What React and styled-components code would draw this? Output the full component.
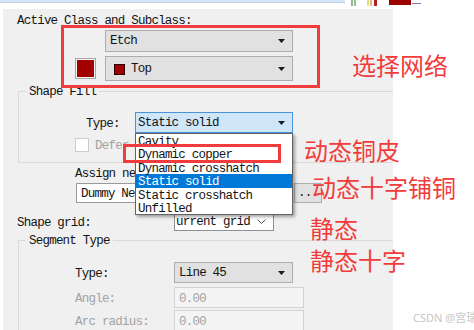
import React from "react";
import styled, { createGlobalStyle } from "styled-components";

const Global = createGlobalStyle`
  html, body { margin: 0; padding: 0; background: #fff; }
  body { font-family: "Liberation Mono", "DejaVu Sans Mono", monospace; }
  * { box-sizing: border-box; }
`;

const Page = styled.div`
  position: relative;
  width: 474px;
  height: 330px;
  overflow: hidden;
  background: #fff;
`;

const TopStrip = styled.div`
  display: flex;
  align-items: flex-start;
  height: 9px;
`;

const TitleBar = styled.div`
  width: 345px;
  height: 3px;
  background: #d3e6f6;
  border-bottom: 1px solid #bcd0e2;
`;

const Bit = styled.div`
  width: ${(p) => p.$w}px;
  height: ${(p) => p.$h}px;
  margin-left: ${(p) => p.$ml || 0}px;
  margin-top: ${(p) => p.$mt || 0}px;
  background: ${(p) => p.$c};
`;

const Panel = styled.div`
  margin-left: 3px;
  width: 390px;
  height: 321px;
  background: #f0f0f0;
  overflow: hidden;
  display: flex;
  flex-direction: column;
  align-items: flex-start;
  padding-top: 4px;
  font-size: 12.5px;
  letter-spacing: -0.78px;
  line-height: 14px;
  color: #141414;
`;

const Label = styled.div`
  margin-left: ${(p) => p.$ml || 0}px;
  margin-top: ${(p) => p.$mt || 0}px;
  width: ${(p) => (p.$w ? `${p.$w}px` : "auto")};
  height: 14px;
  line-height: 16px;
  flex: none;
  white-space: nowrap;
  color: ${(p) => (p.$muted ? "#a3a3a3" : "#141414")};
`;

const ClassGrid = styled.div`
  display: grid;
  grid-template-columns: 21px 188px;
  grid-template-rows: 22px 25px;
  column-gap: 9px;
  row-gap: 4px;
  align-items: center;
  margin-left: 72px;
  margin-top: 3px;
`;

const Swatch = styled.div`
  grid-column: 1;
  grid-row: 2;
  width: 21px;
  height: 21px;
  border: 1px solid #a5a5a5;
  padding: 1px;
  background: #f6f6f6;
  &::after {
    content: "";
    display: block;
    width: 100%;
    height: 100%;
    background: #a30000;
  }
`;

const comboSkins = {
  gray: { bg: "#e1e1e1", bd: "#adadad" },
  focus: { bg: "#cfe5f8", bd: "#4a92dc" },
  white: { bg: "#ffffff", bd: "#8f8f8f" },
  disabled: { bg: "#f4f4f4", bd: "#d2d2d2" },
};

const Combo = styled.div`
  position: relative;
  grid-column: ${(p) => p.$col || "auto"};
  display: flex;
  align-items: center;
  justify-content: space-between;
  flex: none;
  width: ${(p) => p.$w}px;
  height: ${(p) => p.$h || 21}px;
  padding-left: ${(p) => p.$pl ?? 4}px;
  padding-right: 7px;
  background: ${(p) => comboSkins[p.$skin || "gray"].bg};
  border: 1px solid ${(p) => comboSkins[p.$skin || "gray"].bd};
  color: #141414;
  white-space: nowrap;
`;

const ComboText = styled.span`
  display: flex;
  align-items: center;
  gap: 6px;
  height: 14px;
  line-height: 16px;
  overflow: visible;
`;

const LayerIcon = styled.span`
  display: inline-block;
  width: 11px;
  height: 11px;
  margin-top: 2px;
  border: 1px solid #2a0000;
  background: #a30000;
`;

const Row = styled.div`
  display: flex;
  align-items: center;
  margin-left: ${(p) => p.$ml || 0}px;
  margin-top: ${(p) => p.$mt || 0}px;
  gap: ${(p) => p.$gap || 0}px;
`;

const Group = styled.fieldset`
  margin: ${(p) => p.$mt || 0}px 0 0 15px;
  padding: 0 0 ${(p) => p.$pb || 0}px 0;
  width: 400px;
  min-width: 0;
  border: 1px solid #dadada;
  display: flex;
  flex-direction: column;
  align-items: flex-start;
  flex: none;
`;

const Legend = styled.legend`
  margin-left: 7px;
  padding: 0 3px;
  height: 14px;
  line-height: 16px;
  color: #141414;
`;

const Check = styled.span`
  width: 14px;
  height: 14px;
  background: #fff;
  border: 1px solid #cccccc;
  flex: none;
`;

const DropList = styled.ul`
  position: absolute;
  left: -1px;
  top: 20px;
  width: 158px;
  margin: 0;
  padding: 0;
  list-style: none;
  background: #fff;
  border: 1px solid #646464;
  box-shadow: 2px 2px 3px rgba(0, 0, 0, 0.35);
  z-index: 10;
`;

const DropItem = styled.li`
  height: 13.4px;
  line-height: 16px;
  padding-left: 2px;
  overflow: visible;
  background: ${(p) => (p.$sel ? "#0078d7" : "transparent")};
  color: ${(p) => (p.$sel ? "#fff" : "#141414")};
`;

const Field = styled.div`
  display: flex;
  align-items: center;
  flex: none;
  width: ${(p) => p.$w}px;
  height: ${(p) => p.$h || 20}px;
  padding-left: 4px;
  background: ${(p) => (p.$disabled ? "#f4f4f4" : "#fff")};
  border: 1px solid ${(p) => (p.$disabled ? "#d2d2d2" : "#9a9a9a")};
  color: ${(p) => (p.$disabled ? "#a3a3a3" : "#141414")};
  white-space: nowrap;
  overflow: hidden;
`;

const FieldText = styled.span`
  height: 14px;
  line-height: 16px;
`;

const DotsButton = styled.div`
  width: 28px;
  height: 20px;
  display: flex;
  align-items: center;
  justify-content: center;
  background: #e1e1e1;
  border: 1px solid #adadad;
  flex: none;
`;

const RedBox = styled.div`
  position: absolute;
  left: ${(p) => p.$x}px;
  top: ${(p) => p.$y}px;
  width: ${(p) => p.$w}px;
  height: ${(p) => p.$h}px;
  border: 3px solid #f03c3c;
  z-index: 20;
  pointer-events: none;
`;

const Note = styled.div`
  position: absolute;
  left: ${(p) => p.$x}px;
  top: ${(p) => p.$y}px;
  font-family: "Noto Sans CJK SC", "Noto Sans", sans-serif;
  font-size: 24px;
  line-height: 24px;
  color: #f23c3c;
  white-space: nowrap;
  z-index: 30;
`;

const Watermark = styled.div`
  position: absolute;
  left: 413px;
  top: 311px;
  font-family: "Noto Sans", "Noto Sans CJK SC", sans-serif;
  font-size: 11px;
  line-height: 14px;
  color: #c6c6c6;
  white-space: nowrap;
`;

const Arrow = () => (
  <svg width="7" height="4" viewBox="0 0 7 4">
    <path d="M0 0H7L3.5 4Z" fill="#1a1a1a" />
  </svg>
);

const Chevron = () => (
  <svg width="9" height="5" viewBox="0 0 9 5">
    <path d="M0.5 0.5L4.5 4.5L8.5 0.5" stroke="#555" fill="none" />
  </svg>
);

const fillTypes = [
  "Cavity",
  "Dynamic copper",
  "Dynamic crosshatch",
  "Static solid",
  "Static crosshatch",
  "Unfilled",
];

export default function App() {
  return (
    <Page>
      <Global />
      <TopStrip>
        <TitleBar />
        <Bit $w={2} $h={6} $ml={6} $c="#a9a9a9" />
        <Bit $w={2} $h={6} $ml={1} $c="#7ccf7c" />
        <Bit $w={2} $h={6} $ml={11} $c="#d9e878" />
        <Bit $w={2} $h={6} $ml={1} $c="#f0b0a0" />
        <Bit $w={3} $h={6} $ml={2} $c="#b52020" />
        <Bit $w={22} $h={5} $ml={12} $c="#9b0000" />
        <Bit $w={9} $h={1} $ml={1} $mt={3} $c="#8a7aa8" />
      </TopStrip>
      <Panel>
        <Label $ml={14}>Active Class and Subclass:</Label>
        <ClassGrid>
          <Combo $col={2} $w={188} $h={22} $pl={4}>
            <ComboText>Etch</ComboText>
            <Arrow />
          </Combo>
          <Swatch />
          <Combo $col={2} $w={188} $h={25} $pl={8}>
            <ComboText>
              <LayerIcon />
              Top
            </ComboText>
            <Arrow />
          </Combo>
        </ClassGrid>

        <Group $mt={3} $pb={10}>
          <Legend>Shape Fill</Legend>
          <Row $ml={67} $mt={14}>
            <Label $w={49}>Type:</Label>
            <Combo $skin="focus" $w={158} $pl={2}>
              <ComboText>Static solid</ComboText>
              <Arrow />
              <DropList>
                {fillTypes.map((t) => (
                  <DropItem key={t} $sel={t === "Static solid"}>
                    {t}
                  </DropItem>
                ))}
              </DropList>
            </Combo>
          </Row>
          <Row $ml={56} $mt={5} $gap={6}>
            <Check />
            <Label $muted>Defer</Label>
          </Row>
        </Group>

        <Label $ml={72} $mt={3}>
          Assign net name:
        </Label>
        <Row $ml={73} $mt={3} $gap={1}>
          <Field $w={217}>
            <FieldText>Dummy Net</FieldText>
          </Field>
          <DotsButton>...</DotsButton>
        </Row>

        <Row $ml={14} $mt={9}>
          <Label $w={157}>Shape grid:</Label>
          <Combo $skin="white" $w={100} $h={19} $pl={1}>
            <ComboText>urrent grid</ComboText>
            <Chevron />
          </Combo>
        </Row>

        <Group $mt={2}>
          <Legend>Segment Type</Legend>
          <Row $ml={56} $mt={15}>
            <Label $w={99}>Type:</Label>
            <Combo $w={119}>
              <ComboText>Line 45</ComboText>
              <Arrow />
            </Combo>
          </Row>
          <Row $ml={56} $mt={4}>
            <Label $w={99} $muted>
              Angle:
            </Label>
            <Field $w={130} $h={21} $disabled>
              <FieldText>0.00</FieldText>
            </Field>
          </Row>
          <Row $ml={56} $mt={2}>
            <Label $w={99} $muted>
              Arc radius:
            </Label>
            <Field $w={130} $h={21} $disabled>
              <FieldText>0.00</FieldText>
            </Field>
          </Row>
        </Group>
      </Panel>

      <RedBox $x={61} $y={25} $w={259} $h={63} />
      <RedBox $x={123} $y={144} $w={158} $h={19} />

      <Note $x={352} $y={53}>选择网络</Note>
      <Note $x={304} $y={138}>动态铜皮</Note>
      <Note $x={312} $y={175}>动态十字铺铜</Note>
      <Note $x={310} $y={216}>静态</Note>
      <Note $x={310} $y={248}>静态十字</Note>
      <Watermark>CSDN @宫瑞</Watermark>
    </Page>
  );
}
